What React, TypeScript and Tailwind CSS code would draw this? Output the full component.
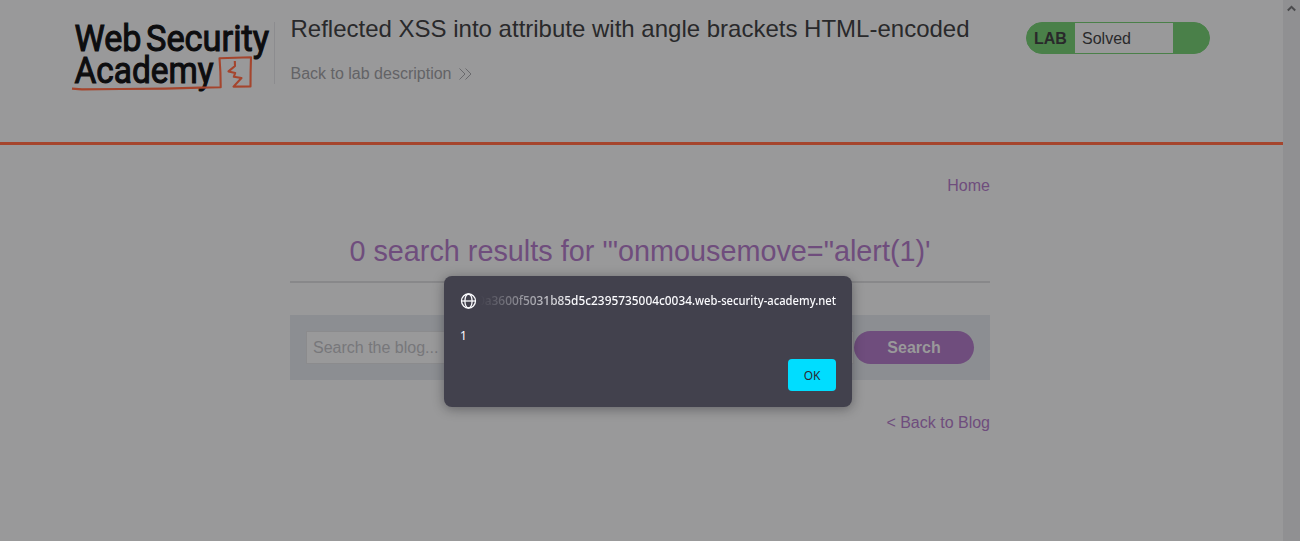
import React from "react";

function Logo() {
  return (
    <svg
      width="202"
      height="78"
      viewBox="70 18 202 78"
      className="block shrink-0 overflow-visible"
      aria-label="Web Security Academy"
    >
      <g fill="#0d0d0f" stroke="#0d0d0f" strokeWidth="1.1" fontFamily="Roboto, sans-serif" fontWeight="400" fontSize="37">
        <text x="74.5" y="50.5" textLength="67" lengthAdjust="spacingAndGlyphs">Web</text>
        <text x="146" y="50.5" textLength="123" lengthAdjust="spacingAndGlyphs">Security</text>
        <text x="74.5" y="82.8" textLength="139" lengthAdjust="spacingAndGlyphs">Academy</text>
      </g>
      <g fill="none" stroke="#a5452d" strokeWidth="2.1" strokeLinejoin="round">
        <path d="M72 88.6 L82 89.4 L120 89 L165 88.6 L200 87.6 L220.7 87.2 L220.4 72 L219.5 58.2 L251 57.2 L250.6 72 L250.5 86.4 L233.5 86.6 L241.5 78 L233.8 76.8 L235.2 73 L228.5 71.4 L235 66 L234.8 61" />
      </g>
    </svg>
  );
}

function Header() {
  return (
    <header className="flex h-[145px] border-b-[3px] border-[#a5452d] pl-[70px]">
      <div className="flex w-[205px] pt-[18px]">
        <Logo />
      </div>
      <div className="mt-[22px] h-[62px] w-px shrink-0 -ml-px bg-[#8c8c8f]" />
      <div className="ml-[15.5px] w-[735.5px] shrink-0 pt-[14px]">
        <h1 className="whitespace-nowrap text-[24px] leading-[29px] text-[#29292b]">
          Reflected XSS into attribute with angle brackets HTML-encoded
        </h1>
        <a className="mt-[22px] flex items-center gap-[8px] text-[16px] leading-[18px] text-[#636366]">
          Back to lab description
          <svg width="13" height="12" viewBox="0 0 13 12" fill="none" stroke="#636366" strokeWidth="0.9">
            <path d="M0.5 0.5 L6 6 L0.5 11.5 M6.5 0.5 L12 6 L6.5 11.5" />
          </svg>
        </a>
      </div>
      <div className="mt-[22px] flex h-[32px] w-[184px] shrink-0 overflow-hidden rounded-full border border-[#4a8049] bg-[#4a8049] text-[16px] leading-[32px] text-[#29292b]">
        <span className="w-[48px] pl-[7px] font-bold">LAB</span>
        <span className="w-[98px] bg-[#99999a] pl-[7px] leading-[31px]">Solved</span>
      </div>
    </header>
  );
}

function Results() {
  return (
    <main className="ml-[290px] w-[700px] text-[#6f4d7d]">
      <nav className="pt-[32px] text-right text-[16px] leading-[18px]">Home</nav>
      <h2 className="mt-[38px] h-[50px] border-b-2 border-[#88888a] text-center text-[28.8px] leading-[36px]">
        0 search results for '"onmousemove="alert(1)'
      </h2>
      <div className="mt-[32px] flex h-[65px] items-center bg-[#8c8e92] px-4">
        <div className="h-[33px] flex-1 border border-[#8b8b8d] bg-[#99999a] pl-[6px] text-[16px] leading-[31px] text-[#77777a]">
          Search the blog...
        </div>
        <div className="h-[33px] w-[120px] rounded-full bg-[#6f4d7d] text-center text-[16px] font-bold leading-[33px] text-[#99999a]">
          Search
        </div>
      </div>
      <div className="mt-[34px] text-right text-[16px] leading-[18px]">&lt; Back to Blog</div>
    </main>
  );
}

function AlertDialog() {
  return (
    <div
      role="dialog"
      className="absolute left-[444px] top-[276px] flex h-[131px] w-[408px] flex-col rounded-[8px] bg-[#42414d] p-4 font-['Noto_Sans',sans-serif] text-[12px] text-[#fbfbfe] shadow-[0_2px_12px_rgba(20,20,26,0.4)]"
    >
      <div className="flex h-[17px] items-center">
        <svg width="17" height="16" viewBox="0 0 17 16" fill="none" stroke="#fbfbfe" strokeWidth="1.3" className="shrink-0">
          <circle cx="8.5" cy="8" r="7" />
          <ellipse cx="8.5" cy="8" rx="3.6" ry="7" />
          <path d="M1.5 8 H15.5" />
        </svg>
        <div className="ml-[3px] flex h-[18px] flex-1 justify-end overflow-hidden [mask-image:linear-gradient(to_right,transparent,black_96px)]">
          <svg width="358" height="18" viewBox="0 0 358 18" className="block shrink-0" fill="#fbfbfe" fontSize="12" fontWeight="500">
            <text x="0" y="13" textLength="214" lengthAdjust="spacingAndGlyphs">
              0a3600f5031b85d5c2395735004c0034
            </text>
            <text x="214" y="13" textLength="144" lengthAdjust="spacingAndGlyphs">
              .web-security-academy.net
            </text>
          </svg>
        </div>
      </div>
      <p className="mt-[18px] leading-[17px]">1</p>
      <button className="mt-[15px] h-8 w-12 self-end rounded-[4px] bg-[#00ddff] pt-px text-[12px] tracking-[-0.2px] text-[#2b2a33]">OK</button>
    </div>
  );
}

export default function App() {
  return (
    <div className="relative flex h-[541px] w-[1300px] overflow-hidden bg-[#99999a] font-['Liberation_Sans',Arial,sans-serif]">
      <div className="w-[1283px] shrink-0">
        <Header />
        <Results />
      </div>
      <div className="flex w-[17px] justify-center bg-[#909092] pt-[5px]">
        <svg width="9" height="7" viewBox="0 0 9 7" fill="none" stroke="#4b4b4d" strokeWidth="2">
          <path d="M0.8 5.5 L4.5 1.8 L8.2 5.5" />
        </svg>
      </div>
      <AlertDialog />
    </div>
  );
}
